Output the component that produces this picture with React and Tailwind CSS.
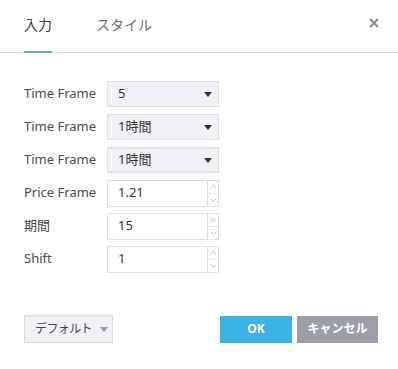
import React from "react";

const font = { fontFamily: '"Noto Sans", "Noto Sans CJK JP", sans-serif' };

function Select({ value }) {
  return (
    <div className="flex h-[26px] w-[112px] items-center justify-between border border-[#dcdee3] bg-[#f0f1f5] pl-[10px] pr-[6px] text-[13px] text-[#333]">
      <span>{value}</span>
      <svg width="8" height="5" viewBox="0 0 8 5"><path d="M0 0 H8 L4 5 Z" fill="#333" /></svg>
    </div>
  );
}

function NumInput({ value }) {
  return (
    <div className="flex h-[27px] w-[112px] border border-[#dcdee3] bg-white text-[13px] text-[#333]">
      <div className="flex flex-1 items-center pl-[10px]">{value}</div>
      <div className="flex w-[11px] flex-col border-l border-[#dcdee3]">
        <div className="flex flex-1 items-center justify-center border-b border-[#e6e7ea]">
          <svg width="7" height="4" viewBox="0 0 7 4"><path d="M0.5 3.5 L3.5 0.5 L6.5 3.5" stroke="#b8bbc2" fill="none" strokeWidth="1" /></svg>
        </div>
        <div className="flex flex-1 items-center justify-center">
          <svg width="7" height="4" viewBox="0 0 7 4"><path d="M0.5 0.5 L3.5 3.5 L6.5 0.5" stroke="#b8bbc2" fill="none" strokeWidth="1" /></svg>
        </div>
      </div>
    </div>
  );
}

function Row({ label, children }) {
  return (
    <div className="flex h-[26px] items-center">
      <div className="w-[83px] text-[13px] text-[#4a4a4a]">{label}</div>
      {children}
    </div>
  );
}

export default function App() {
  return (
    <div className="relative h-[369px] w-[398px] bg-white" style={font}>
      <div className="relative flex h-[53px] items-start border-b border-[#dcdde0]">
        <div className="ml-[24px] flex h-[52px] flex-col items-center justify-start pt-[15px]">
          <span className="text-[14px] leading-[20px] text-[#3c4049]">入力</span>
        </div>
        <div className="ml-[44px] pt-[15px] text-[14px] leading-[20px] text-[#6a6d75]">スタイル</div>
        <div className="absolute left-[24px] top-[51px] h-[2px] w-[28px] bg-[#58bd8a]" />
        <div className="absolute left-[369px] top-[18px]">
          <svg width="10" height="10" viewBox="0 0 10 10"><path d="M1 1 L9 9 M9 1 L1 9" stroke="#8a8c92" strokeWidth="2" /></svg>
        </div>
      </div>
      <div className="ml-[24px] mt-[28px] flex flex-col gap-[7px]">
        <Row label="Time Frame"><Select value="5" /></Row>
        <Row label="Time Frame"><Select value="1時間" /></Row>
        <Row label="Time Frame"><Select value="1時間" /></Row>
        <Row label="Price Frame"><NumInput value="1.21" /></Row>
        <Row label="期間"><NumInput value="15" /></Row>
        <Row label="Shift"><NumInput value="1" /></Row>
      </div>
      <div className="ml-[24px] mr-[20px] mt-[43px] flex items-center justify-between">
        <div className="flex h-[28px] w-[89px] shrink-0 items-center whitespace-nowrap border border-[#d8dadf] bg-[#f0f1f5] pl-[10px] text-[12px] tracking-[-0.6px] text-[#444]">
          <span>デフォルト</span>
          <svg className="ml-[8px] shrink-0" width="8" height="5" viewBox="0 0 8 5"><path d="M0 0 H8 L4 5 Z" fill="#999" /></svg>
        </div>
        <div className="flex gap-[5px]">
          <div className="flex h-[27px] w-[72px] items-center justify-center bg-[#3bb3e4] text-[12px] font-bold text-white">OK</div>
          <div className="flex h-[27px] w-[81px] items-center justify-center whitespace-nowrap bg-[#9b9ea6] text-[12px] font-bold text-white">キャンセル</div>
        </div>
      </div>
    </div>
  );
}
